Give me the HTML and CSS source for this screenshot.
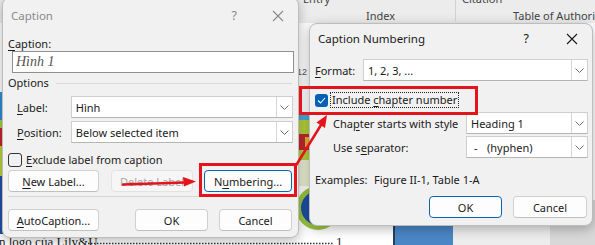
FILE: index.html
```html
<!DOCTYPE html>
<html>
<head>
<meta charset="utf-8">
<link rel="stylesheet" href="styles.css">
</head>
<body>
<div class="screen">
  <div class="ribbon">
    <div class="rgroup g1"><span class="rtop">Entry</span><span class="rlabel">Index</span></div>
    <div class="rgroup g2"><span class="rtop">Citation</span><span class="rlabel">Table of Authori</span></div>
  </div>
  <div class="doc">
    <svg class="pic" width="595" height="222" viewBox="0 23 595 222">
      <rect x="0" y="23" width="595" height="222" fill="#ffffff"/>
      <rect x="0" y="92" width="4" height="28" fill="#2f8fd6"/>
      <rect x="0" y="120" width="4" height="8" fill="#a8cc3a"/>
      <rect x="0" y="128" width="4" height="18" fill="#c8262c"/>
      <rect x="0" y="146" width="4" height="30" fill="#b9d23a"/>
      <rect x="0" y="176" width="4" height="58" fill="#1f52a8"/>
      <text x="297" y="75" font-family="Liberation Sans, sans-serif" font-size="9" fill="#555">12</text>
      <rect x="297" y="115" width="16" height="5" fill="#49a9dc"/>
      <rect x="297" y="120" width="16" height="40" fill="#b4d03c"/>
      <rect x="298" y="134" width="14" height="16" fill="#c0282c"/>
      <rect x="305" y="137" width="5" height="10" fill="#e7b23b"/>
      <rect x="297" y="160" width="16" height="26" fill="#e9efd2"/>
      <circle cx="318" cy="208" r="22" fill="#9cc640"/>
      <circle cx="318" cy="208" r="17" fill="#1d4ea6"/>
      <rect x="393" y="200" width="60" height="45" fill="#4a86c6"/>
      <rect x="393" y="200" width="2" height="45" fill="#2a3f5a"/>
      <rect x="453" y="200" width="97" height="45" fill="#ededed"/>
      <rect x="550" y="200" width="45" height="45" fill="#d8d8d8"/>
      <text x="-1" y="246" font-family="Liberation Serif, serif" font-size="13" fill="#222">n logo của Lily&amp;U</text>
      <line x1="88" y1="243.5" x2="334" y2="243.5" stroke="#333" stroke-width="1.5" stroke-dasharray="1.5 1.5"/>
      <text x="336" y="246" font-family="Liberation Serif, serif" font-size="13" fill="#222">1</text>
    </svg>
  </div>

  <div class="dlg dlg1">
    <div class="tbar inactive">
      <span class="ttl">Caption</span>
      <span class="help">?</span>
      <span class="close"><svg width="12" height="12" viewBox="0 0 12 12"><path d="M1 1L11 11M11 1L1 11" stroke="#8a8a8a" stroke-width="1.1"/></svg></span>
    </div>
    <div class="body1">
      <div class="lbl"><u>C</u>aption:</div>
      <div class="input"><span class="inp-text">Hình 1</span></div>
      <div class="group"><span>Options</span><span class="gline"></span></div>
      <div class="row r-label">
        <span class="rl"><u>L</u>abel:</span>
        <div class="combo w1"><span class="cv">Hình</span><span class="dd"><svg width="9" height="5" viewBox="0 0 9 5"><path d="M0.5 0.5L4.5 4.5L8.5 0.5" fill="none" stroke="#6a6a6a" stroke-width="1"/></svg></span></div>
      </div>
      <div class="row r-pos">
        <span class="rl"><u>P</u>osition:</span>
        <div class="combo w1"><span class="cv">Below selected item</span><span class="dd"><svg width="9" height="5" viewBox="0 0 9 5"><path d="M0.5 0.5L4.5 4.5L8.5 0.5" fill="none" stroke="#6a6a6a" stroke-width="1"/></svg></span></div>
      </div>
      <div class="chk-row">
        <span class="cb"></span><span><u>E</u>xclude label from caption</span>
      </div>
      <div class="btn-row">
        <span class="btn b-new"><u>N</u>ew Label...</span>
        <span class="btn b-del disabled">Delete Label</span>
        <span class="btn b-num focus">N<u>u</u>mbering...</span>
      </div>
      <div class="sep"></div>
      <div class="btn-row r2">
        <span class="btn b-auto"><u>A</u>utoCaption...</span>
        <span class="spacer"></span>
        <span class="btn b-ok">OK</span>
        <span class="btn b-cancel">Cancel</span>
      </div>
    </div>
  </div>

  <div class="dlg dlg2">
    <div class="tbar t2">
      <span class="ttl">Caption Numbering</span>
      <span class="help">?</span>
      <span class="close"><svg width="12" height="12" viewBox="0 0 12 12"><path d="M1 1L11 11M11 1L1 11" stroke="#1a1a1a" stroke-width="1.1"/></svg></span>
    </div>
    <div class="body2">
      <div class="row f-row">
        <span class="rl2"><u>F</u>ormat:</span>
        <div class="combo w2"><span class="cv">1, 2, 3, ...</span><span class="dd"><svg width="9" height="5" viewBox="0 0 9 5"><path d="M0.5 0.5L4.5 4.5L8.5 0.5" fill="none" stroke="#6a6a6a" stroke-width="1"/></svg></span></div>
      </div>
      <div class="chk-row c2">
        <span class="cb checked"><svg width="9" height="7" viewBox="0 0 9 7"><path d="M1 3.5L3.5 6L8 1" fill="none" stroke="#fff" stroke-width="1.1"/></svg></span>
        <span class="focus-text">Include <u>c</u>hapter number</span>
      </div>
      <div class="row s-row">
        <span class="rl3">Cha<u>p</u>ter starts with style</span>
        <div class="combo w3"><span class="cv">Heading 1</span><span class="dd"><svg width="9" height="5" viewBox="0 0 9 5"><path d="M0.5 0.5L4.5 4.5L8.5 0.5" fill="none" stroke="#6a6a6a" stroke-width="1"/></svg></span></div>
      </div>
      <div class="row s-row2">
        <span class="rl3">Use s<u>e</u>parator:</span>
        <div class="combo w3"><span class="cv"><span class="hy">-</span>(hyphen)</span><span class="dd"><svg width="9" height="5" viewBox="0 0 9 5"><path d="M0.5 0.5L4.5 4.5L8.5 0.5" fill="none" stroke="#6a6a6a" stroke-width="1"/></svg></span></div>
      </div>
      <div class="examples"><span class="ex-l">Examples:</span><span>Figure II-1, Table 1-A</span></div>
      <div class="btn-row r3">
        <span class="btn b-ok2 default">OK</span>
        <span class="btn b-cancel2">Cancel</span>
      </div>
    </div>
  </div>

  <svg class="annot" width="595" height="245" viewBox="0 0 595 245">
    <rect x="200.5" y="164.5" width="95" height="31" fill="none" stroke="#e3141c" stroke-width="3"/>
    <rect x="300.5" y="87.5" width="176" height="26" fill="none" stroke="#e3141c" stroke-width="3"/>
    <path d="M123 184.5L185 182.5" stroke="#e3141c" stroke-width="2.5" stroke-linecap="round"/>
    <polygon points="183,177 196,181.5 184,186.5" fill="#e3141c"/>
    <path d="M295 167L321 125" stroke="#e3141c" stroke-width="2.5" stroke-linecap="round"/>
    <polygon points="327,115 325,128 316.4,122.6" fill="#e3141c"/>
  </svg>
</div>
</body>
</html>
```
FILE: styles.css
```css
* { box-sizing: border-box; }
html, body { margin: 0; padding: 0; }
body {
  width: 595px; height: 245px; overflow: hidden;
  font-family: "Noto Sans", sans-serif;
  font-size: 11px; color: #1a1a1a;
}
u { text-decoration: underline; text-underline-offset: 2px; }
.screen { position: relative; width: 595px; height: 245px; overflow: hidden; background: #fff; }

/* ribbon */
.ribbon { height: 23px; background: #ececec; display: flex; padding-left: 298px; color: #444; position: relative; z-index: 1; }
.rgroup { display: flex; flex-direction: column; }
.g1 { width: 158px; border-right: 1px solid #d2d2d2; height: 21px; }
.g1 .rtop { padding-left: 5px; }
.g1 .rlabel { padding-left: 68px; }
.g2 { flex: 1; }
.g2 .rtop { padding-left: 6px; }
.g2 .rlabel { padding-left: 57px; }
.rtop { line-height: 14px; margin-top: -8px; white-space: nowrap; }
.rlabel { line-height: 14px; margin-top: 3px; white-space: nowrap; }

/* document */
.doc { display: flex; flex-direction: column; }
.pic { display: block; }

/* dialogs */
.dlg { position: absolute; z-index: 2; background: #f1f1f1; border: 1px solid #bdbdbd; border-radius: 8px; box-shadow: 0 3px 12px rgba(0,0,0,0.28); overflow: hidden; }
.dlg1 { left: 2px; top: -3px; width: 297px; height: 241px; }
.dlg2 { left: 309px; top: 23px; width: 284px; height: 203px; }

.tbar { display: flex; align-items: center; padding-left: 8px; }
.dlg1 .tbar { height: 35px; }
.t2 { height: 29px; }
.ttl { flex: 1; font-size: 11.5px; }
.inactive { color: #8a8a8a; }
.help { font-size: 12.5px; }
.dlg1 .help { margin-right: 35px; }
.dlg1 .close { margin-right: 14px; display: flex; }
.t2 .help { margin-right: 37px; }
.t2 .close { margin-right: 14px; display: flex; }

.body1 { padding: 0 5px; display: flex; flex-direction: column; }
.lbl { line-height: 15px; margin-top: 3px; }
.input { margin-left: 4px; width: 282px; height: 22px; background: #fff; border: 1px solid #8f8f8f; display: flex; align-items: center; padding-left: 3px; }
.inp-text { font-family: "Liberation Serif", serif; font-style: italic; font-size: 14px; color: #555; }
.group { display: flex; align-items: center; line-height: 16px; margin-top: 2px; }
.gline { flex: 1; height: 1px; background: #d9d9d9; margin-left: 7px; margin-right: 1px; }

.row { display: flex; align-items: center; height: 22px; }
.r-label { margin-top: 5px; }
.r-pos { margin-top: 3px; }
.rl { width: 63px; padding-left: 9px; }
.combo { height: 22px; background: #fff; border: 1px solid #cfcfcf; border-bottom-color: #b5b5b5; display: flex; align-items: center; }
.cv { flex: 1; padding-left: 4px; white-space: nowrap; }
.dd { width: 16px; height: 20px; border-left: 1px solid #d6d6d6; display: flex; align-items: center; justify-content: center; background: #fff; }
.w1 { width: 223px; }

.chk-row { display: flex; align-items: center; height: 15px; margin-top: 9px; gap: 4px; }
.cb { width: 14px; height: 14px; border: 1px solid #333; border-radius: 3px; display: inline-flex; align-items: center; justify-content: center; }
.cb.checked { width: 13px; height: 13px; border: none; background: #005fb8; }

.btn-row { display: flex; height: 22px; margin-top: 3px; }
.btn { height: 22px; background: #fdfdfd; border: 1px solid #d0d0d0; border-bottom-color: #c0c0c0; border-radius: 4px; display: flex; align-items: center; justify-content: center; white-space: nowrap; }
.b-new { width: 91px; }
.b-del { width: 82px; margin-left: 12px; }
.b-num { width: 88px; margin-left: 11px; }
.disabled { color: #a6a6a6; background: #f6f6f6; border-color: #e2e2e2; }
.focus { border-color: #0a64b4; }
.sep { height: 1px; background: #d6d6d6; margin-top: 4px; margin-right: 1px; }
.r2 { margin-top: 12px; }
.b-auto { width: 91px; }
.spacer { flex: 1; }
.b-ok { width: 73px; }
.b-cancel { width: 73px; margin-left: 11px; margin-right: 1px; }

/* dialog 2 */
.body2 { padding: 0 4px 0 5px; display: flex; flex-direction: column; }
.f-row { margin-top: 6px; }
.rl2 { width: 48px; }
.w2 { width: 225px; }
.c2 { margin-top: 11px; height: 16px; gap: 2px; }
.focus-text { border: 1px dotted #222; padding: 0 1px; line-height: 14px; }
.s-row { margin-top: 4px; }
.s-row2 { margin-top: 2px; }
.rl3 { width: 151px; padding-left: 18px; white-space: nowrap; }
.w3 { width: 122px; }
.hy { display: inline-block; width: 16px; padding-left: 3px; }
.examples { display: flex; line-height: 16px; margin-top: 14px; }
.ex-l { width: 59px; }
.r3 { margin-top: 8px; justify-content: flex-end; }
.b-ok2 { width: 73px; }
.b-cancel2 { width: 74px; margin-left: 11px; margin-right: 1px; }
.default { border-color: #0a64b4; }

.annot { position: absolute; z-index: 3; left: 0; top: 0; pointer-events: none; }
```
